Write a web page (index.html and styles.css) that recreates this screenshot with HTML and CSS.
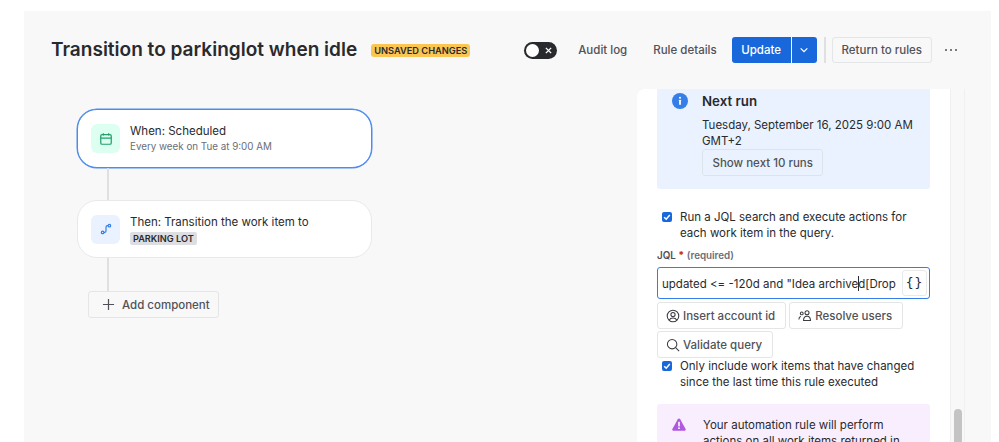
FILE: index.html
```html
<!DOCTYPE html>
<html lang="en">
<head>
<meta charset="utf-8">
<title>Transition to parkinglot when idle</title>
<link rel="stylesheet" href="styles.css">
</head>
<body>
<div class="app">
  <header class="topbar">
    <h1 class="title">Transition to parkinglot when idle</h1>
    <span class="lozenge">UNSAVED CHANGES</span>
    <div class="actions">
      <span class="toggle"><span class="knob"></span><svg class="toggle-x" viewBox="0 0 8 8"><path d="M1 1l6 6M7 1L1 7"/></svg></span>
      <a class="link link-audit">Audit log</a>
      <a class="link link-details">Rule details</a>
      <div class="split">
        <button class="primary">Update</button>
        <button class="primary caret"><svg viewBox="0 0 12 12"><path d="M2 4l4 4 4-4"/></svg></button>
      </div>
      <span class="divider"></span>
      <button class="btn return">Return to rules</button>
      <span class="more"><i></i><i></i><i></i></span>
    </div>
  </header>
  <div class="workspace">
    <main class="canvas">
      <div class="node node-active">
        <span class="tile tile-green">
          <svg viewBox="0 0 16 16"><rect x="2" y="3" width="12" height="11" rx="1.5"/><path d="M2 7h12M5 1.500V4M11 1.500V4"/></svg>
        </span>
        <div class="node-text">
          <div class="node-title">When: Scheduled</div>
          <div class="node-sub">Every week on Tue at 9:00 AM</div>
        </div>
      </div>
      <span class="line line-a"></span>
      <div class="node node-then">
        <span class="tile tile-blue">
          <svg viewBox="0 0 16 16"><circle cx="3.500" cy="12.500" r="1.700"/><circle cx="12.500" cy="3.500" r="1.700"/><path d="M5.200 12.500h.8a2 2 0 0 0 2-2v-5a2 2 0 0 1 2-2h.8"/></svg>
        </span>
        <div class="node-text">
          <div class="node-title">Then: Transition the work item to</div>
          <span class="tag">PARKING LOT</span>
        </div>
      </div>
      <span class="line line-b"></span>
      <button class="btn add"><svg viewBox="0 0 14 14"><path d="M7 1v12M1 7h12"/></svg>Add component</button>
    </main>
    <aside class="panel">
      <section class="info">
        <svg class="info-icon" viewBox="0 0 16 16"><circle cx="8" cy="8" r="8"/><rect class="glyph" x="7.100" y="6.800" width="1.800" height="5" rx=".4"/><circle class="glyph" cx="8" cy="4.700" r="1.050"/></svg>
        <div>
          <h2 class="info-title">Next run</h2>
          <p class="info-body">Tuesday, September 16, 2025 9:00 AM GMT+2</p>
          <button class="btn runs">Show next 10 runs</button>
        </div>
      </section>
      <label class="check check-first">
        <span class="box"><svg viewBox="0 0 10 10"><path d="M2.200 5.200l2 2 3.600-4.200"/></svg></span>
        <span>Run a JQL search and execute actions for each work item in the query.</span>
      </label>
      <div class="field-label">JQL <b>*</b> <em>(required)</em></div>
      <div class="jql">
        <span class="jql-text">updated &lt;= -120d and "Idea archive<span class="caret-mark"></span>d[Drop</span>
        <span class="braces">{}</span>
      </div>
      <div class="tools">
        <button class="btn tool"><svg viewBox="0 0 16 16"><circle cx="8" cy="8" r="6.600"/><circle cx="8" cy="6.300" r="2.400"/><path d="M3.600 12.800c1-1.900 2.600-2.500 4.400-2.500s3.400.6 4.400 2.500"/></svg>Insert account id</button>
        <button class="btn tool"><svg viewBox="0 0 16 16"><circle cx="10.300" cy="4.300" r="2.300"/><path d="M6.300 13.200c0-3 1.500-5 4-5s4 2 4 5z"/><circle cx="4.300" cy="5" r="1.600"/><path d="M1 12c0-1.800.7-3 2.200-3.700"/></svg>Resolve users</button>
        <button class="btn tool"><svg viewBox="0 0 16 16"><circle cx="7" cy="7" r="5.400"/><path d="M11 11l4 4"/></svg>Validate query</button>
      </div>
      <label class="check">
        <span class="box"><svg viewBox="0 0 10 10"><path d="M2.200 5.200l2 2 3.600-4.200"/></svg></span>
        <span>Only include work items that have changed since the last time this rule executed</span>
      </label>
      <section class="warn">
        <svg class="warn-icon" viewBox="0 0 14 13"><path class="tri" d="M7 .5c.5 0 .9.3 1.200.8l5.400 9.600c.5.900-.1 1.900-1.100 1.900H1.500c-1 0-1.600-1-1.100-1.900L5.800 1.300C6.100.8 6.500.5 7 .5z"/><rect class="glyph" x="6.200" y="3.800" width="1.600" height="4.600"/><rect class="glyph" x="6.200" y="9.400" width="1.600" height="1.600"/></svg>
        <p>Your automation rule will perform actions on all work items returned in</p>
      </section>
    </aside>
    <div class="track"><span class="thumb"></span></div>
  </div>
</div>
</body>
</html>
```
FILE: styles.css
```css
* { box-sizing: border-box; }
html, body { margin: 0; height: 100%; overflow: hidden; background: #fff; }
body { padding: 11px 8px 0 24px; font-family: Inter, "Liberation Sans", sans-serif; color: #292a2e; }
button { font-family: inherit; }

.app { height: 431px; background: #f8f8f8; display: flex; flex-direction: column; overflow: hidden; }

.topbar { height: 78px; flex: none; display: flex; align-items: center; padding: 0 33px 0 27px; }
.title { margin: 0; font-size: 19.050px; line-height: 24px; font-weight: 600; color: #292a2e; }
.lozenge { margin-left: 14px; height: 13px; padding: 0 3px; border-radius: 3px; background: #fbc552; color: #292a2e; font-size: 9.250px; line-height: 13px; font-weight: 600; white-space: nowrap; }
.actions { margin-left: auto; display: flex; align-items: center; }

.toggle { position: relative; width: 33px; height: 17px; border-radius: 9px; background: #292a2e; display: block; }
.knob { position: absolute; left: 2px; top: 2px; width: 13px; height: 13px; border-radius: 50%; background: #fff; }
.toggle-x { position: absolute; right: 5px; top: 5px; width: 7px; height: 7px; fill: none; stroke: #fff; stroke-width: 1.600; }

.link { font-size: 11.500px; line-height: 16px; color: #505258; font-weight: 500; white-space: nowrap; }
.link-audit { margin-left: 21px; }
.link-details { margin-left: 26px; }

.split { margin-left: 15px; display: flex; height: 26px; }
.primary { height: 26px; border: 0; background: #1868db; color: #fff; font-size: 11.500px; font-weight: 500; padding: 0 9.500px; border-radius: 3px 0 0 3px; }
.caret { width: 25px; padding: 0; margin-left: 1px; border-radius: 0 3px 3px 0; display: flex; align-items: center; justify-content: center; }
.caret svg { width: 10px; height: 10px; fill: none; stroke: #fff; stroke-width: 1.500; }

.divider { margin-left: 7px; width: 2px; height: 26px; background: #dfe0e2; }

.btn { display: inline-flex; align-items: center; background: #f8f8f8; border: 1px solid #e4e5e7; border-radius: 3px; color: #505258; font-size: 11.500px; font-weight: 500; white-space: nowrap; }
.return { margin-left: 6px; height: 26px; padding: 0 9px; }
.more { margin-left: 13px; display: flex; gap: 3px; width: 13px; }
.more i { width: 2px; height: 2px; border-radius: 50%; background: #505258; flex: none; }

.workspace { flex: 1; min-height: 0; display: flex; }
.canvas { flex: none; width: 613px; padding: 20px 0 0 53px; display: flex; flex-direction: column; align-items: flex-start; }

.node { width: 295px; height: 59px; flex: none; background: #fff; border: 1px solid #e8e9eb; border-radius: 20px; display: flex; align-items: center; padding: 0 13px; }
.node-active { border: 1px solid #4c8bf0; box-shadow: 0 0 0 .5px #4c8bf0; }
.node-then { height: 58px; }
.tile { width: 29px; height: 29px; flex: none; border-radius: 6px; display: flex; align-items: center; justify-content: center; }
.tile svg { width: 14px; height: 14px; fill: none; stroke-width: 1.400; }
.tile-green { background: #dcfff1; }
.tile-green svg { stroke: #22a06b; }
.tile-blue { background: #e9f2fe; }
.tile-blue svg { width: 12px; height: 12px; stroke: #357de8; stroke-width: 1.600; }
.node-text { margin-left: 10px; min-width: 0; }
.node-title { font-size: 11.500px; line-height: 16px; color: #292a2e; }
.node-sub { font-size: 9.800px; line-height: 14px; margin-top: 1px; color: #6b6e76; }
.tag { display: block; width: fit-content; margin-top: 2px; height: 13px; padding: 0 3px; border-radius: 2px; background: #dddee1; color: #292a2e; font-size: 9.200px; line-height: 13px; font-weight: 600; }

.line { width: 2px; margin-left: 30px; flex: none; background: #dfe0e2; }
.line-a { height: 32px; }
.line-b { height: 33px; }

.add { height: 27px; margin-left: 11px; flex: none; padding: 0 8px 0 13px; }
.add svg { width: 13px; height: 13px; margin-right: 7px; fill: none; stroke: #505258; stroke-width: 1.300; }

.panel { width: 313px; flex: none; background: #fff; border-radius: 8px 0 0 0; padding: 0 20px; overflow: hidden; }

.info { display: flex; height: 100px; padding: 0 14px 0 15px; background: #e9f2fe; border-radius: 0 0 3px 3px; }
.info-icon { width: 16px; height: 16px; margin: 4px 14px 0 0; flex: none; fill: #357de8; }
.glyph { fill: #fff; }
.info-title { margin: 3px 0 0; font-size: 13.300px; line-height: 18px; font-weight: 600; color: #292a2e; }
.info-body { margin: 7px 0 0; font-size: 11.500px; line-height: 16px; color: #292a2e; }
.runs { height: 27px; padding: 0 9.500px; background: #e9f2fe; border-color: #dde3ea; }

.check { display: flex; font-size: 11.500px; line-height: 16px; color: #292a2e; padding-left: 5px; }
.check-first { margin-top: 20px; }
.box { width: 10px; height: 10px; margin: 3px 8px 0 0; flex: none; border-radius: 2px; background: #1868db; }
.box svg { display: block; width: 10px; height: 10px; fill: none; stroke: #fff; stroke-width: 1.500; }

.field-label { margin-top: 8px; font-size: 9.800px; line-height: 14px; font-weight: 600; color: #505258; }
.field-label b { color: #c9372c; }
.field-label em { font-style: normal; color: #6b6e76; }

.jql { margin-top: 4px; height: 32px; display: flex; align-items: center; border: 1.500px solid #357de8; border-radius: 3px; padding: 0 2px 0 4px; }
.jql-text { flex: 1; min-width: 0; overflow: hidden; white-space: nowrap; font-size: 11.500px; color: #292a2e; }
.caret-mark { display: inline-block; width: 1px; height: 15px; margin-right: -1px; vertical-align: -3px; background: #292a2e; }
.braces { width: 25px; height: 26px; flex: none; margin-left: 4px; border: 1px solid #e8e9eb; border-radius: 3px; font-family: "DejaVu Sans Mono", monospace; font-size: 13px; line-height: 23px; text-align: center; letter-spacing: 1px; color: #292a2e; }

.tools { margin-top: 3px; display: flex; flex-wrap: wrap; gap: 2px 3px; }
.tool { height: 27px; padding: 0 10px 0 8px; background: #fff; }
.tool svg { width: 14px; height: 14px; margin-right: 3px; fill: none; stroke: #3b3d42; stroke-width: 1.200; }

.warn { display: flex; margin-top: 14px; padding: 13px 14px 12px 15px; background: #f8eefe; border-radius: 3px; }
.warn-icon { width: 14px; height: 13px; margin: 1px 17px 0 0; flex: none; }
.tri { fill: #af59e1; }
.warn p { margin: 0; font-size: 11.500px; line-height: 16px; color: #292a2e; }

.track { width: 15px; flex: none; border-left: 1px solid #f0f0f0; border-right: 1px solid #f0f0f0; position: relative; }
.thumb { position: absolute; left: 3px; top: 320px; width: 8px; height: 60px; border-radius: 4px; background: #c4c4c4; }
```
